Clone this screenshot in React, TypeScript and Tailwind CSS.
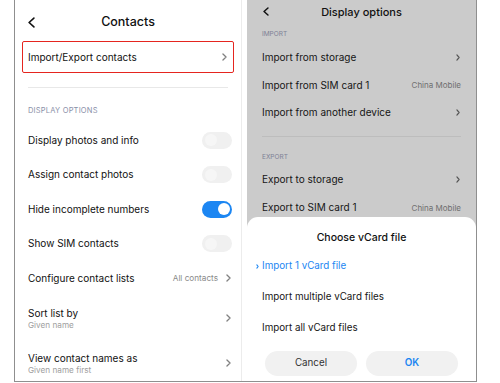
const FONT = 'font-["Inter","Noto_Sans",sans-serif]';

// small ">" glyph used in list rows
function Chevron({ w = 5, h = 8, className = 'text-[#808080]', sw = 1.3 }: { w?: number; h?: number; className?: string; sw?: number }) {
  return (
    <svg width={w} height={h} viewBox={`0 0 ${w} ${h}`} fill="none" className={`shrink-0 ${className}`}>
      <path
        d={`M${sw / 2 + 0.3} ${sw / 2 + 0.3}L${w - sw / 2 - 0.3} ${h / 2}L${sw / 2 + 0.3} ${h - sw / 2 - 0.3}`}
        stroke="currentColor"
        strokeWidth={sw}
        strokeLinecap="round"
        strokeLinejoin="round"
      />
    </svg>
  );
}

function Back({ w, h, sw }: { w: number; h: number; sw: number }) {
  return (
    <svg width={w} height={h} viewBox={`0 0 ${w} ${h}`} fill="none" className="text-[#111]">
      <path
        d={`M${w - sw / 2 - 0.3} ${sw / 2 + 0.3}L${sw / 2 + 0.3} ${h / 2}L${w - sw / 2 - 0.3} ${h - sw / 2 - 0.3}`}
        stroke="currentColor"
        strokeWidth={sw}
        strokeLinecap="round"
        strokeLinejoin="round"
      />
    </svg>
  );
}

function Toggle({ on }: { on?: boolean }) {
  return (
    <div
      className={`w-[30px] h-[17px] rounded-full flex items-center px-[2.5px] ${
        on ? 'bg-[#1c86f2] justify-end' : 'bg-[#f0f0f0] justify-start'
      }`}
    >
      <div className={`w-[12px] h-[12px] rounded-full ${on ? 'bg-white' : 'bg-[#f6f6f6]'}`} />
    </div>
  );
}

const TOGGLES = [
  { label: 'Display photos and info', on: false },
  { label: 'Assign contact photos', on: false },
  { label: 'Hide incomplete numbers', on: true },
  { label: 'Show SIM contacts', on: false },
];

function ContactsScreen() {
  return (
    <div className="w-[226px] h-full bg-white overflow-hidden flex flex-col">
      {/* header */}
      <div className="h-[41px] shrink-0 relative flex items-center justify-center pt-[3px]">
        <div className="absolute left-[13px] top-[17px]">
          <Back w={7} h={11} sw={1.6} />
        </div>
        <span className="text-[12.5px] font-medium text-[#111] leading-none">Contacts</span>
      </div>

      {/* highlighted row */}
      <div className="mx-[7px] h-[32px] shrink-0 border-[1.5px] border-[#e5251f] rounded-[2px] flex items-center justify-between pl-[5px] pr-[6px]">
        <span className="text-[10px] text-[#111]">Import/Export contacts</span>
        <Chevron />
      </div>

      <div className="mx-[13px] mt-[14px] h-px shrink-0 bg-[#e8e8e8]" />

      <div className="h-[35px] shrink-0 pt-[18px] pl-[13px]">
        <div className="text-[7.5px] leading-[10px] text-[#8a90a8] tracking-[0.2px]">DISPLAY OPTIONS</div>
      </div>

      {TOGGLES.map((t) => (
        <div key={t.label} className="h-[34.5px] shrink-0 flex items-center justify-between pl-[13px] pr-[9px]">
          <span className="text-[10px] text-[#111]">{t.label}</span>
          <Toggle on={t.on} />
        </div>
      ))}

      <div className="h-[34.5px] shrink-0 flex items-center justify-between pl-[13px] pr-[10px]">
        <span className="text-[10px] text-[#111]">Configure contact lists</span>
        <div className="flex items-center gap-[8px]">
          <span className="text-[8.2px] text-[#8a8a8a]">All contacts</span>
          <Chevron />
        </div>
      </div>

      {[
        { t: 'Sort list by', s: 'Given name' },
        { t: 'View contact names as', s: 'Given name first' },
      ].map((r) => (
        <div key={r.t} className="h-[45px] shrink-0 flex items-center justify-between pl-[13px] pr-[10px]">
          <div className="flex flex-col">
            <span className="text-[10px] leading-[14px] text-[#111]">{r.t}</span>
            <span className="text-[8.2px] leading-[10px] text-[#a0a0a0]">{r.s}</span>
          </div>
          <Chevron />
        </div>
      ))}
    </div>
  );
}

function Row({ label, right }: { label: string; right?: string }) {
  return (
    <div className="h-[27.5px] flex items-center justify-between pl-[15px] pr-[16px]">
      <span className="text-[10px] text-[#161616]">{label}</span>
      {right ? (
        <span className="text-[8px] text-[#6f6f6f] -mr-px">{right}</span>
      ) : (
        <Chevron w={4} h={7} sw={1.2} className="text-[#555]" />
      )}
    </div>
  );
}

function DisplayOptionsScreen() {
  return (
    <div className="w-[229px] h-full bg-[#cbcbcb] relative overflow-hidden">
      <div className="h-[25px] relative flex items-center justify-center">
        <div className="absolute left-[16px] top-[7px]">
          <Back w={6} h={9} sw={1.5} />
        </div>
        <span className="text-[11px] font-medium text-[#111] leading-none">Display options</span>
      </div>

      <div className="h-[19px] pt-[4.5px] pl-[15px]">
        <div className="text-[6.5px] leading-[9px] text-[#7d8196]">IMPORT</div>
      </div>
      <Row label="Import from storage" />
      <Row label="Import from SIM card 1" right="China Mobile" />
      <Row label="Import from another device" />

      <div className="mx-[15px] mt-[9px] h-px bg-[#bdbdbd]" />

      <div className="h-[29px] pt-[16px] pl-[15px]">
        <div className="text-[6.5px] leading-[9px] text-[#7d8196]">EXPORT</div>
      </div>
      <div className="flex flex-col [&>div]:h-[28px]">
        <Row label="Export to storage" />
        <Row label="Export to SIM card 1" right="China Mobile" />
      </div>

      {/* bottom sheet */}
      <div className="absolute left-0 right-0 top-[217px] bottom-0 bg-white rounded-t-[11px]">
        <div className="pt-[14px] text-center text-[10.5px] leading-[13px] font-medium text-[#111]">
          Choose vCard file
        </div>
        <div className="mt-[7px]">
          <div className="h-[30.75px] flex items-center pl-[9px] gap-[3px] text-[9.8px] text-[#1c86f2]">
            <Chevron w={3} h={5} sw={1.1} className="text-[#1c86f2]" />
            <span>Import 1 vCard file</span>
          </div>
          <div className="h-[30.75px] flex items-center pl-[15px] text-[9.8px] text-[#161616]">
            Import multiple vCard files
          </div>
          <div className="h-[30.75px] flex items-center pl-[15px] text-[9.8px] text-[#161616]">
            Import all vCard files
          </div>
        </div>
        <div className="mt-[8px] px-[18px] flex gap-[9px]">
          <div className="flex-1 h-[24.5px] rounded-full bg-[#f1f1f1] flex items-center justify-center text-[9.8px] text-[#333]">
            Cancel
          </div>
          <div className="flex-1 h-[24.5px] rounded-full bg-[#f1f1f1] flex items-center justify-center text-[9.8px] font-semibold text-[#1c86f2]">
            OK
          </div>
        </div>
      </div>
    </div>
  );
}

export default function App() {
  return (
    <div className={`w-[500px] h-[383px] bg-white overflow-hidden ${FONT}`}>
      <div className="ml-[14px] w-[463px] h-[382px] border-l border-r border-b border-[#8f8f8f] flex">
        <ContactsScreen />
        <div className="w-px h-full bg-[#ececec]" />
        <div className="w-[5px] h-full bg-white" />
        <DisplayOptionsScreen />
      </div>
    </div>
  );
}
